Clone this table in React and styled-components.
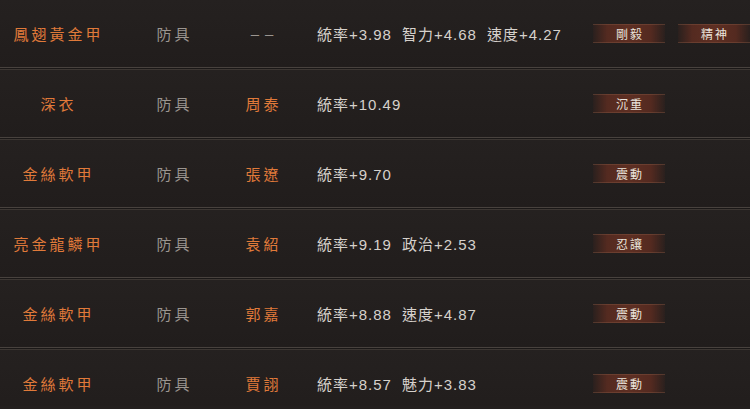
import styled, { createGlobalStyle } from "styled-components";

const GlobalStyle = createGlobalStyle`
  html, body {
    margin: 0;
    padding: 0;
    background: #231f1e;
    overflow: hidden;
  }
  body {
    font-family: "Liberation Sans", "Noto Sans CJK TC", sans-serif;
  }
`;

const rows = [
  { name: "鳳翅黃金甲", type: "防具", owner: null, stats: ["統率+3.98", "智力+4.68", "速度+4.27"], skills: ["剛毅", "精神"] },
  { name: "深衣", type: "防具", owner: "周泰", stats: ["統率+10.49"], skills: ["沉重"] },
  { name: "金絲軟甲", type: "防具", owner: "張遼", stats: ["統率+9.70"], skills: ["震動"] },
  { name: "亮金龍鱗甲", type: "防具", owner: "袁紹", stats: ["統率+9.19", "政治+2.53"], skills: ["忍讓"] },
  { name: "金絲軟甲", type: "防具", owner: "郭嘉", stats: ["統率+8.88", "速度+4.87"], skills: ["震動"] },
  { name: "金絲軟甲", type: "防具", owner: "賈詡", stats: ["統率+8.57", "魅力+3.83"], skills: ["震動"] },
];

const List = styled.div`
  width: 750px;
  height: 409px;
  overflow: hidden;
  margin-top: -3px;
`;

const Separator = styled.div`
  height: 1px;
  border-top: 1px solid #48423e;
  border-bottom: 1px solid #3d3733;
  background: #1b1817;
`;

const Row = styled.div`
  height: 67px;
  display: grid;
  grid-template-columns: 114px 118px 60px 301px 85px 1fr;
  align-items: center;
  background: linear-gradient(180deg, #252120 0%, #231f1e 50%, #211d1c 100%);
`;

const Cell = styled.div`
  text-align: center;
  font-family: "Noto Sans CJK TC", sans-serif;
  font-size: 15px;
  letter-spacing: 3px;
  padding-left: 3px;
  color: ${(p) => (p.$accent ? "#e07a3a" : "#9b9590")};
  white-space: nowrap;
`;

const Dash = styled(Cell)`
  font-family: "Liberation Sans", sans-serif;
  letter-spacing: 6px;
  padding-left: 6px;
`;

const Stats = styled.div`
  display: flex;
  gap: 10px;
  padding-left: 25px;
  font-size: 15px;
  letter-spacing: 1px;
  color: #d6d1cc;
  white-space: nowrap;
`;

const Stat = styled.span`
  font-family: "Liberation Sans", "Noto Sans CJK TC", sans-serif;
`;

const Badge = styled.div`
  width: 72px;
  height: 19px;
  box-sizing: border-box;
  display: flex;
  align-items: center;
  justify-content: center;
  font-family: "Noto Sans CJK TC", sans-serif;
  font-size: 12px;
  letter-spacing: 2px;
  padding-left: 2px;
  color: #ece5dd;
  background: linear-gradient(90deg, rgba(70, 36, 28, 0.2) 0%, #542a20 20%, #5e2f23 50%, #542a20 80%, rgba(70, 36, 28, 0.2) 100%);
  border-top: 1px solid rgba(130, 85, 65, 0.45);
  border-bottom: 1px solid rgba(130, 85, 65, 0.45);
`;

export default function App() {
  return (
    <>
      <GlobalStyle />
      <List>
        {rows.map((r, i) => (
          <div key={i}>
            <Separator />
            <Row>
              <Cell $accent>{r.name}</Cell>
              <Cell>{r.type}</Cell>
              {r.owner ? <Cell $accent>{r.owner}</Cell> : <Dash>––</Dash>}
              <Stats>
                {r.stats.map((s) => (
                  <Stat key={s}>{s}</Stat>
                ))}
              </Stats>
              {r.skills.map((s) => (
                <div key={s}>
                  <Badge>{s}</Badge>
                </div>
              ))}
            </Row>
          </div>
        ))}
      </List>
    </>
  );
}
